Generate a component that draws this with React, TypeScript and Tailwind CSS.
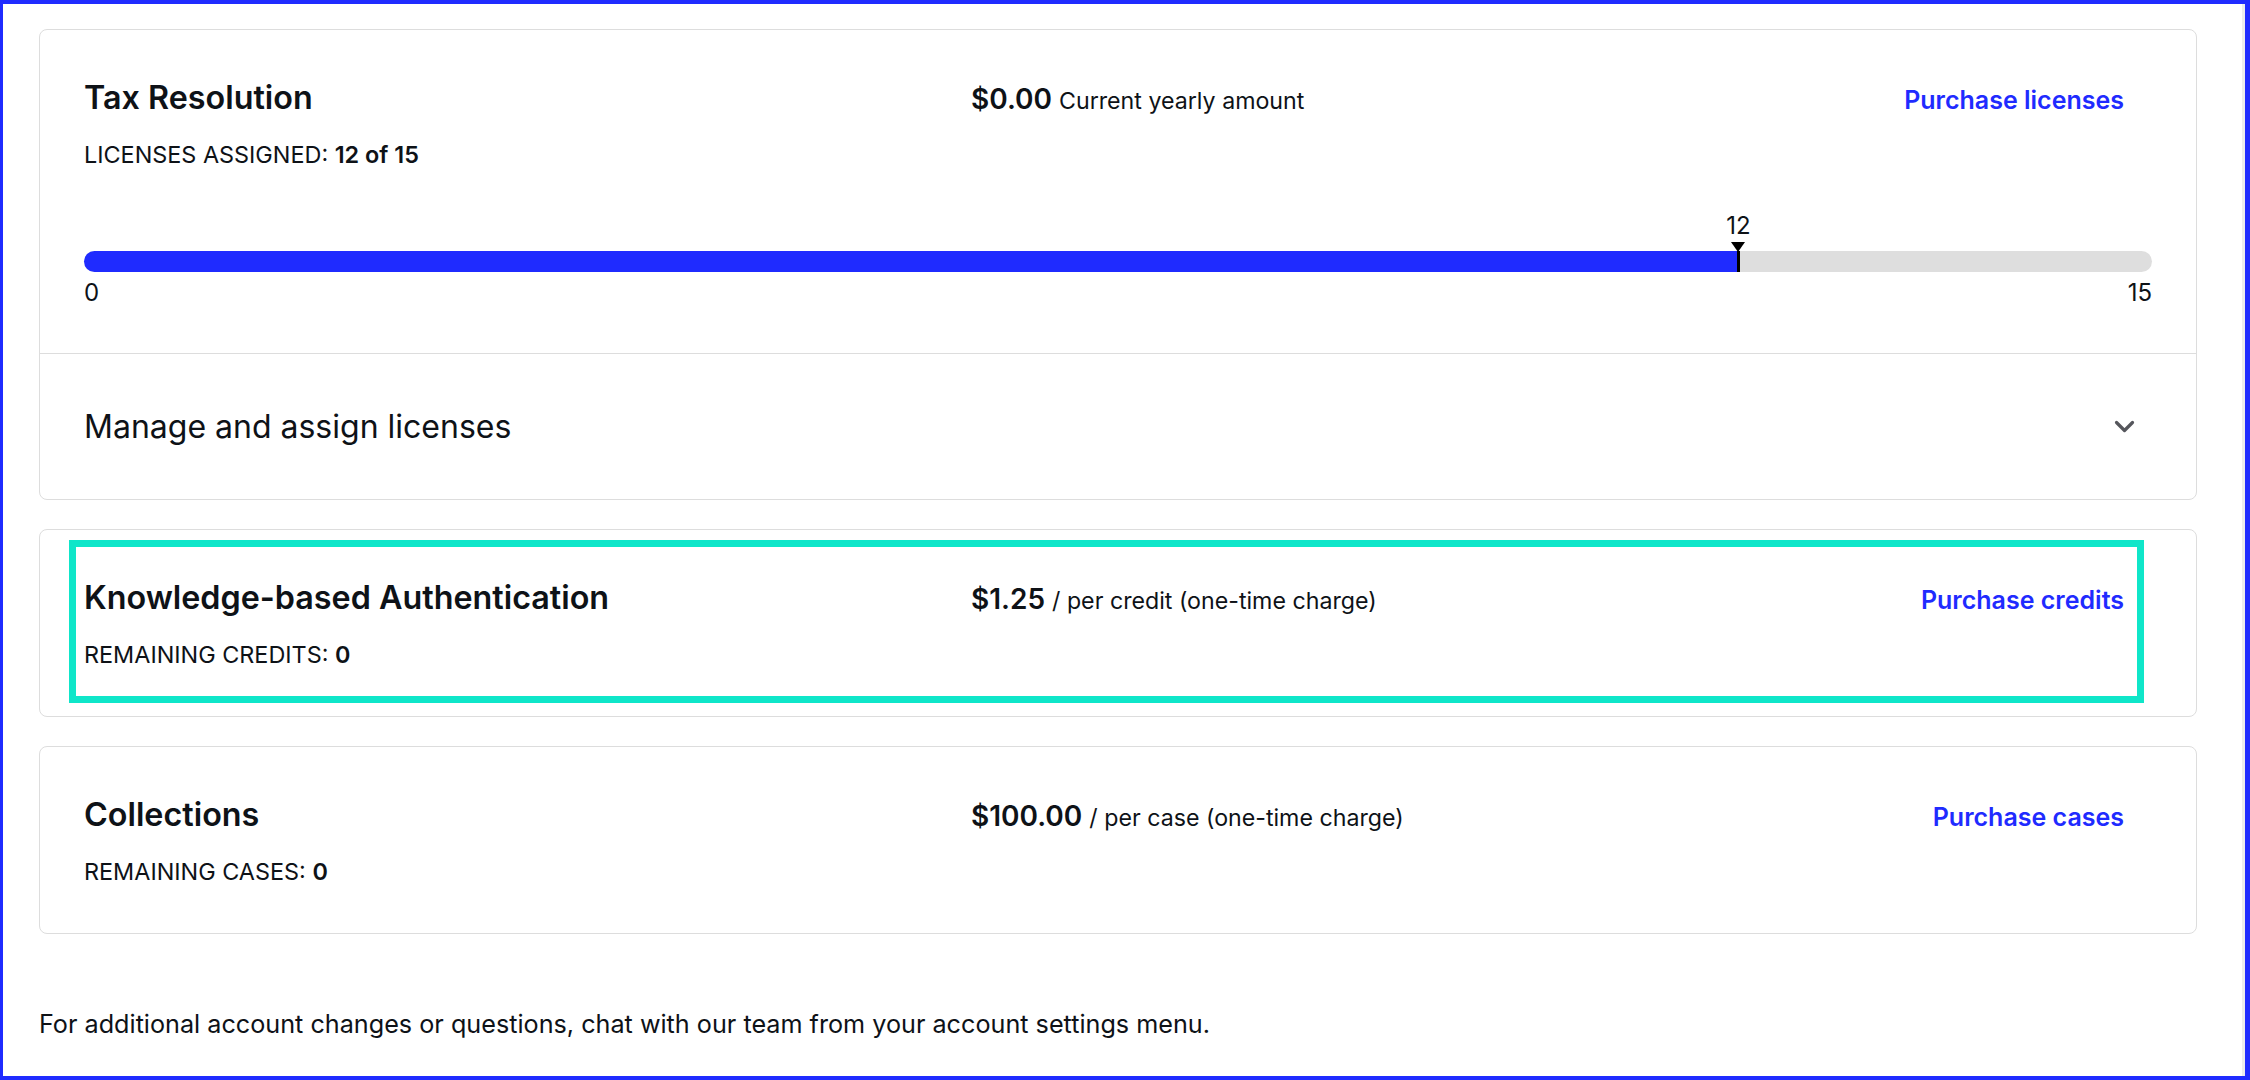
import React from "react";

const BLUE = "#1f2bff";

function Chevron() {
  return (
    <svg width="21" height="14" viewBox="0 0 21 14" fill="none">
      <path d="M2.5 2.5 L10.5 10.5 L18.5 2.5" stroke="#55565c" strokeWidth="3.2" strokeLinecap="round" strokeLinejoin="round" />
    </svg>
  );
}

function Row({ title, label, value, price, unit, link }: { title: string; label: string; value: string; price: string; unit: string; link: string }) {
  return (
    <div className="flex items-baseline">
      <div className="w-[887px] shrink-0 flex flex-col">
        <div className="text-[32.3px] leading-[40px] font-semibold text-[#0e1217]">{title}</div>
        <div className="mt-[23px] text-[23.4px] leading-[28px] text-[#0e1217]">
          {label}: <span className="font-semibold">{value}</span>
        </div>
      </div>
      <div className="flex-1 flex items-baseline gap-[7px] text-[#0e1217]">
        <span className="text-[28px] leading-[40px] font-semibold">{price}</span>
        <span className="text-[23.2px] leading-[28px]">{unit}</span>
      </div>
      <a className="mr-[28px] text-[25px] leading-[32px] font-semibold" style={{ color: BLUE }}>
        {link}
      </a>
    </div>
  );
}

export default function App() {
  const pct = (12 / 15) * 100;
  return (
    <div className="w-[2250px] h-[1080px] border-t-[4px] border-b-[4px] border-l-[3px] border-r-[5px] border-[#1f2bff] bg-white overflow-hidden" style={{ fontFamily: "Inter, 'Noto Sans', sans-serif" }}>
      <div className="h-full border-r-[3px] border-[#ececec] pt-[25px] pl-[36px] pr-[45px]">
        {/* Card 1 */}
        <div className="rounded-[8px] border border-[#dddddd] bg-white">
          <div className="px-[44px] pt-[48px] pb-[46px]">
            <Row title="Tax Resolution" label="LICENSES ASSIGNED" value="12 of 15" price="$0.00" unit="Current yearly amount" link="Purchase licenses" />
            <div className="mt-[43px] relative">
              <div className="h-[28px] relative">
                <span className="absolute top-0 -translate-x-1/2 text-[24px] leading-[28px] text-[#0e1217]" style={{ left: `${pct}%` }}>
                  12
                </span>
              </div>
              <div className="mt-[11px] h-[21px] rounded-full bg-[#dedede] relative">
                <div className="h-full rounded-l-full" style={{ width: `${pct}%`, background: BLUE }} />
                <div className="absolute top-[-9px] -translate-x-1/2 flex flex-col items-center" style={{ left: `${pct}%` }}>
                  <svg width="14" height="10" viewBox="0 0 14 10">
                    <path d="M0 0 L14 0 L7 10 Z" fill="#000" />
                  </svg>
                  <div className="w-[3px] h-[21px] bg-black -mt-[1px]" />
                </div>
              </div>
              <div className="mt-[7px] flex justify-between text-[24px] leading-[28px] text-[#0e1217]">
                <span>0</span>
                <span>15</span>
              </div>
            </div>
          </div>
          <div className="border-t border-[#dddddd] h-[146px] px-[44px] flex items-center justify-between">
            <span className="text-[32px] leading-[40px] text-[#0e1217]">Manage and assign licenses</span>
            <span className="mr-[17px] flex items-center">
              <Chevron />
            </span>
          </div>
        </div>

        {/* Card 2 */}
        <div className="mt-[29px] relative rounded-[8px] border border-[#dddddd] bg-white px-[44px] pt-[48px] pb-[47px]">
          <Row title="Knowledge-based Authentication" label="REMAINING CREDITS" value="0" price="$1.25" unit="/ per credit (one-time charge)" link="Purchase credits" />
          <div className="absolute left-[29px] top-[10px] right-[52px] bottom-[13px] border-[7px] border-[#0fe6c9] pointer-events-none" />
        </div>

        {/* Card 3 */}
        <div className="mt-[29px] rounded-[8px] border border-[#dddddd] bg-white px-[44px] pt-[48px] pb-[47px]">
          <Row title="Collections" label="REMAINING CASES" value="0" price="$100.00" unit="/ per case (one-time charge)" link="Purchase cases" />
        </div>

        <p className="mt-[74px] text-[25.2px] leading-[32px] text-[#0e1217]">
          For additional account changes or questions, chat with our team from your account settings menu.
        </p>
      </div>
    </div>
  );
}
